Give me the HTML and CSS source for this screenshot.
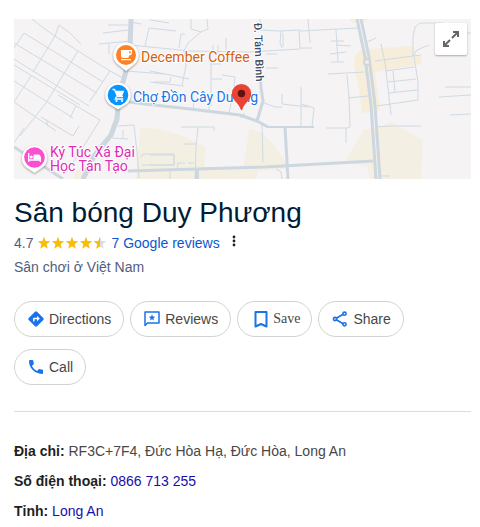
FILE: index.html
```html
<!DOCTYPE html>
<html lang="vi">
<head>
<meta charset="utf-8">
<meta name="viewport" content="width=device-width, initial-scale=1">
<title>Sân bóng Duy Phương</title>
<link rel="stylesheet" href="styles.css">
</head>
<body>
<main class="panel">
  <section class="map">
    <svg class="map-art" viewBox="14 19 457 160" preserveAspectRatio="xMidYMid slice">
      <rect x="14" y="19" width="457" height="160" fill="#f5f3f4"/>
      <!-- built-up areas -->
      <g fill="#f4efe3">
        <path d="M141 127L158 129 180 135 206 147 204 169 200 179H136L138 150Z"/>
        <path d="M249 129L263 133 275 147 288 165V169L258 171 256 179H200L204 169 243 168 246 150Z"/>
        <path d="M75 172L90 162 86 179H74Z"/>
        <path d="M364 129L372 129 378 127 391 122 423 140 421 179H370L367 166 345 162Z"/>
      </g>
      <path fill="#f6eedb" d="M349 19H369L364 22 352 23ZM355 57Q358 49 367 49L413 46 416 55 422 57 421 64 375 72 380 111 362 113 359 90 354 65Z"/>
      <!-- side streets -->
      <g class="street">
        <path d="M32 19L42 27 55 36 78 51 110 71 123 78"/>
        <path d="M55 36L59 25 70 33 81 44M55 36L33 72M24 33L14 48M24 33L103 82M14 43L97 93M14 59L89 106M14 65L80 105M14 81L73 118M14 102L56 131"/>
        <path d="M78 51L46 103 20 136M110 71L90 101M31 76L14 102M58 95L100 120 80 152 65 174M76 106L70 118M41 117L73 136M73 136L79 126M46 119L48 126M24 128L14 143"/>
        <path d="M108 25H128M103 33L128 30M99 44L130 41M109 44V54M131 22L141 24M145 46L149 28 176 31M130 45L190 51 249 52 300 49M126 71L165 74M150 82L184 86M118 126L134 125 137 152 139 178M112 138L128 139M123 130V138M140 157L144 154H174V165H142"/>
        <path d="M191 19V29L201 32 208 29 207 19M201 32L188 43 184 51 186 66 182 85M179 48L181 34H185M150 20L169 23M213 45V51M218 45V54M226 38V50M211 52V106M211 79H222M211 64H221M150 71L175 76 189 79M171 77L170 82H154M222 75L235 77 234 86M260 19V30L280 31 300 30M281 31L280 43 282 48M299 31L300 48M283 33V47M266 54H277M266 68H278M282 94V104L308 107M262 102L275 107 282 107M301 87V127"/>
        <path d="M300 31L358 28M308 19L310 43M300 48H312M336 30L338 62M331 41H344M336 45L351 46M330 54L346 52M331 62H344M328 74L364 72M347 75L349 98 350 127 347 128H326M348 98L368 96M346 128V143M367 42L376 38M381 44L385 62 391 115M375 61L421 55M413 56V36L415 27 420 23H443L446 33H471M413 56L417 50 429 45M414 57L418 82V100L377 106M386 71L414 67M388 82L416 79M389 93L417 90M393 71L395 92M445 87H471M439 97L471 95M450 115L471 114M376 127L391 126H421M381 176H390"/>
        <path d="M181 127H214V131M198 128L196 146 195 179M184 144H196M177 170L178 163H185M188 163H194M150 155H174V165H150M170 171V179M262 125L263 162M276 169L281 172 282 179M240 117H244V113M194 101L193 111M209 106V111M231 103L229 114M301 104L314 108 312 127H300"/>
      </g>
      <g class="road">
        <path d="M129 102L145 104 190 109 240 115 257 121 268 127" stroke-width="3"/>
        <path d="M268 127H314" stroke-width="2"/>
        <path d="M257 121L263 101 261 88 260 70" stroke-width="3"/>
        <path d="M128 171L265 167 373 161" stroke-width="3"/>
        <path d="M285 127L288 179" stroke-width="3"/>
        <path d="M197 169V179" stroke-width="4"/>
        <path d="M14 147L63 179" stroke-width="3"/>
        <path d="M131 19L130 48 126 71 119 96 117 119 111 135 94 156 83 179" stroke-width="5"/>
        <path d="M357 19L365 57 371 105 376 179M361 19L369 57 375 105 380 179" stroke-width="3"/>
        <circle cx="367" cy="62" r="3" stroke-width="2" fill="#f6eedb"/>
      </g>
      <!-- place names -->
      <g class="place">
        <text class="orange" x="141" y="62">December Coffee</text>
        <text class="blue" x="133" y="102">Chợ Đồn Cây Dương</text>
        <text class="pink" x="50" y="157">Ký Túc Xá Đại</text>
        <text class="pink" x="50" y="171">Học Tân Tạo</text>
      </g>
      <text class="street-name" transform="translate(254 23) rotate(88)">Đ. Tám Bình</text>
      <!-- category pins -->
      <g class="pin">
        <path fill="#fff" d="M126 42.500a12.500 12.500 0 0 1 9 21.200L126 71l-9-7.300a12.500 12.500 0 0 1 9-21.200Z"/>
        <circle cx="126" cy="55" r="10" fill="#ff8126"/>
        <path fill="#fff" d="M121 50h11v2.500a3 3 0 0 1-3 3v.5q0 2-2 2h-4q-2 0-2-2ZM121 59h10v1.200h-10Z"/>
        <path fill="#ff8126" d="M129 51.300h1.700v2H129Z"/>
      </g>
      <g class="pin">
        <path fill="#fff" d="M118 82.500a12.500 12.500 0 0 1 9 21.200l-9 5.800-9-5.800a12.500 12.500 0 0 1 9-21.200Z"/>
        <circle cx="118" cy="95" r="10.300" fill="#0795ff"/>
        <path fill="none" stroke="#fff" stroke-width="1.300" d="M112.500 89.500h2l3 7h5.500M116.500 96.500l-1.200 2.500h8"/>
        <path fill="#fff" d="M115.500 90.800h8.800l-2.300 5.500h-4.600Z"/>
        <circle cx="116.500" cy="101" r="1.100" fill="#fff"/><circle cx="122" cy="101" r="1.100" fill="#fff"/>
      </g>
      <g class="pin">
        <path fill="#fff" d="M34.500 145.500a12.500 12.500 0 0 1 9 21.200l-9 6.300-9-6.300a12.500 12.500 0 0 1 9-21.200Z"/>
        <circle cx="34.500" cy="157.500" r="10.300" fill="#f94fd0"/>
        <path fill="none" stroke="#fff" stroke-width="1.300" d="M28.700 153v9M28.700 160h11.600M40.300 162v-5"/>
        <path fill="#fff" d="M33.500 154.500h5q2 0 2 2v3h-7Z"/>
        <circle cx="31.300" cy="157" r="1.500" fill="#fff"/>
      </g>
      <!-- selected place -->
      <path fill="#ea4335" d="M241.500 84a9.700 9.700 0 0 1 9.700 9.700c0 6.500-6.700 8.800-8.700 15.300q-1 2.500-2 0c-2-6.500-8.700-8.800-8.700-15.300a9.700 9.700 0 0 1 9.700-9.700Z"/>
      <circle cx="241.500" cy="93.500" r="3.700" fill="#601410"/>
    </svg>
    <button class="expand" type="button" aria-label="Mở rộng bản đồ">
      <svg width="18" height="18" viewBox="0 0 18 18" fill="none" stroke="#666" stroke-width="2"><path d="M11 2h5v5M16 2l-6 6M7 16H2v-5M2 16l6-6"/></svg>
    </button>
  </section>

  <h1 class="title">Sân bóng Duy Phương</h1>
  <div class="rating">
    <span>4.7</span>
    <svg class="stars" width="70" height="14" viewBox="0 0 70 14" role="img" aria-label="4.7 / 5">
      <defs>
        <path id="star" d="M7 .8l1.600 4.300 4.600.2-3.600 2.900 1.200 4.500L7 10.200l-3.800 2.500 1.200-4.500L.8 5.300l4.600-.2Z"/>
        <clipPath id="half"><rect width="7" height="14"/></clipPath>
      </defs>
      <g fill="#fbbc04"><use href="#star"/><use href="#star" x="14"/><use href="#star" x="28"/><use href="#star" x="42"/></g>
      <use href="#star" x="56" fill="#dadce0"/>
      <g transform="translate(56)"><use href="#star" fill="#fbbc04" clip-path="url(#half)"/></g>
    </svg>
    <a class="review-link" href="#reviews">7 Google reviews</a>
    <button class="more" type="button" aria-label="More">
      <svg width="4" height="12" viewBox="0 0 4 12" fill="#202124"><circle cx="2" cy="2" r="1.400"/><circle cx="2" cy="6" r="1.400"/><circle cx="2" cy="10" r="1.400"/></svg>
    </button>
  </div>
  <p class="category">Sân chơi ở Việt Nam</p>

  <div class="actions">
    <button class="chip" type="button">
      <svg width="16" height="16" viewBox="0 0 16 16"><path fill="#1a73e8" d="M8 .3q.6 0 1 .4l6.300 6.300q.9 1 0 2L9 15.300q-1 .9-2 0L.7 9q-.9-1 0-2L7 .7q.4-.4 1-.4Z"/><path fill="#fff" d="M5 10.500V7.700q0-1 1-1h3V4.900l2.900 2.700L9 10.300V8.200H6.500v2.300Z"/></svg>
      Directions
    </button>
    <button class="chip" type="button">
      <svg width="16" height="16" viewBox="0 0 16 16"><path fill="none" stroke="#1a73e8" stroke-width="1.500" stroke-linejoin="round" d="M1 1h14v11H3.500L1 14.500Z"/><path fill="#1a73e8" d="M8 3.300l.9 2.200 2.300.2-1.800 1.500.6 2.300-2-1.300-2 1.300.6-2.300-1.800-1.500 2.300-.2Z"/></svg>
      Reviews
    </button>
    <button class="chip chip-save" type="button">
      <svg width="20" height="20" viewBox="0 0 20 20"><path fill="none" stroke="#1a73e8" stroke-width="2" stroke-linejoin="round" d="M4.500 3h11v14.500L10 15l-5.500 2.500Z"/></svg>
      Save
    </button>
    <button class="chip" type="button">
      <svg width="16" height="16" viewBox="0 0 16 16" fill="none" stroke="#1a73e8" stroke-width="1.600"><path d="M4.300 7.200l6.800-3.900M4.300 8.800l6.800 3.900"/><circle cx="3" cy="8" r="1.600"/><circle cx="12.500" cy="2.700" r="1.600"/><circle cx="12.500" cy="13.300" r="1.600"/></svg>
      Share
    </button>
    <button class="chip" type="button">
      <svg width="16" height="16" viewBox="0 0 16 16"><path fill="#1a73e8" d="M1 1.900Q1 1 1.900 1h2.500q.8 0 .9.800.1 1.300.5 2.500.2.500-.2.900L3.900 7q1.700 3.300 5.100 5.100l1.800-1.800q.4-.3.900-.2 1.200.5 2.500.5.800.1.800.9V14q0 .9-.9.900Q8.700 15 4.800 11.100 1 7.200 1 1.900Z"/></svg>
      Call
    </button>
  </div>

  <div class="facts">
    <p><strong>Địa chỉ:</strong> RF3C+7F4, Đức Hòa Hạ, Đức Hòa, Long An</p>
    <p><strong>Số điện thoại:</strong> <a href="tel:0866713255">0866 713 255</a></p>
    <p><strong>Tỉnh:</strong> <a href="#long-an">Long An</a></p>
  </div>
</main>
</body>
</html>
```
FILE: styles.css
```css
* { box-sizing: border-box; }

body {
  margin: 0;
  background: #fff;
  color: #474747;
  font: 14px/20px "Liberation Sans", Arial, sans-serif;
}

button { font: inherit; color: inherit; cursor: pointer; }
svg { flex: none; }
p, h1 { margin: 0; }
a { text-decoration: none; }

.panel { padding: 19px 9px 0 14px; }

.map { position: relative; height: 160px; overflow: hidden; }
.map-art { display: block; width: 100%; height: 100%; }
.street { fill: none; stroke: #cfdae4; stroke-width: 1; }
.road { fill: none; stroke: #cdd7df; stroke-linejoin: round; }
.place text,
.street-name {
  font-family: Roboto, sans-serif;
  stroke: #fff;
  stroke-width: 2px;
  stroke-linejoin: round;
  paint-order: stroke;
}
.place { font-size: 14px; }
.street-name { font-size: 11px; font-weight: 500; fill: #3c4b64; }
.orange { fill: #d2620f; }
.blue { fill: #1a73e8; }
.pink { fill: #e02bb5; }
.pin { filter: drop-shadow(0 1px 1px rgba(0, 0, 0, .35)); }

.expand {
  position: absolute;
  top: 4px;
  right: 4px;
  display: grid;
  place-items: center;
  width: 32px;
  height: 32px;
  padding: 0;
  border: 0;
  border-radius: 2px;
  background: #fff;
  box-shadow: 0 1px 2px rgba(0, 0, 0, .3);
}

.title {
  margin-top: 16px;
  color: #001d35;
  font-size: 28px;
  font-weight: 400;
  line-height: 36px;
}

.rating {
  display: flex;
  align-items: center;
  gap: 4px;
  margin-top: 2px;
  color: #545d7e;
}
.review-link { color: #0b57d0; }
.more {
  display: flex;
  margin: 0 0 4px 8px;
  padding: 0;
  border: 0;
  background: none;
}
.category { margin-top: 4px; color: #545d7e; }

.actions {
  display: flex;
  flex-wrap: wrap;
  gap: 12px 6px;
  margin-top: 24px;
  padding-bottom: 26px;
  border-bottom: 1px solid #dadce0;
}
.chip {
  display: flex;
  align-items: center;
  gap: 5px;
  height: 36px;
  padding: 0 12px 0 13px;
  border: 1px solid #d2d2d2;
  border-radius: 18px;
  background: #fff;
}
.chip-save {
  gap: 2px;
  padding-right: 11px;
  font-family: "Liberation Serif", "Times New Roman", serif;
}

.facts {
  display: grid;
  gap: 10px;
  padding-top: 29px;
}
.facts strong { color: #1f1f1f; }
.facts a { color: #1a0dab; }
```
